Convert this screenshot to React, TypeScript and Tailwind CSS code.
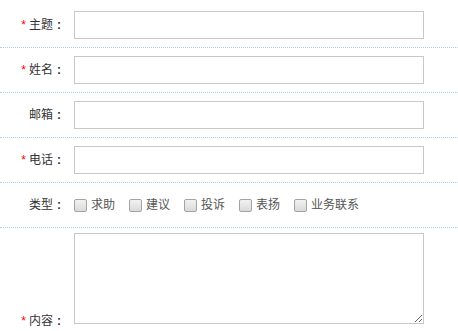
const font = { fontFamily: '"Liberation Sans", "Noto Sans CJK SC", sans-serif' };

const Label = ({ text, required }: { text: string; required?: boolean }) => (
  <div className="flex w-[65px] shrink-0 items-center justify-end text-[12px] leading-[18px] text-[#333]">
    {required && <span className="mr-[3px] text-[#ff0000]">*</span>}
    {text}
    <span className="inline-block w-[12px] text-center font-bold">:</span>
  </div>
);

const Field = ({ text, required }: { text: string; required?: boolean }) => (
  <div className="flex items-center border-b border-dotted border-[#a8d2ee] pt-[8px] pb-[8px]">
    <Label text={text} required={required} />
    <input className="ml-[9px] h-[28px] w-[350px] border border-[#c8c8c8] bg-white outline-none" />
  </div>
);

const types = ["求助", "建议", "投诉", "表扬", "业务联系"];

export default function App() {
  return (
    <div className="h-[331px] w-[458px] overflow-hidden bg-white pt-[3px]" style={font}>
      {/* 主题 / 姓名 / 邮箱 / 电话 */}
      <Field text="主题" required />
      <Field text="姓名" required />
      <Field text="邮箱" />
      <Field text="电话" required />

      {/* 类型 */}
      <div className="flex h-[45px] items-center border-b border-dotted border-[#a8d2ee]">
        <Label text="类型" />
        <div className="ml-[9px] flex items-center gap-[14px]">
          {types.map((t) => (
            <label key={t} className="flex items-center gap-[4px] text-[12px] leading-[18px] text-[#555]">
              <span className="h-[13px] w-[13px] rounded-[2px] border border-[#a3a3a3] bg-gradient-to-b from-[#f2f2f2] to-[#dadada]" />
              {t}
            </label>
          ))}
        </div>
      </div>

      {/* 内容 */}
      <div className="flex items-end pt-[5px]">
        <div className="-mb-[6px]">
          <Label text="内容" required />
        </div>
        <textarea className="ml-[9px] h-[91px] w-[350px] border border-[#c8c8c8] bg-white outline-none" />
      </div>
    </div>
  );
}
